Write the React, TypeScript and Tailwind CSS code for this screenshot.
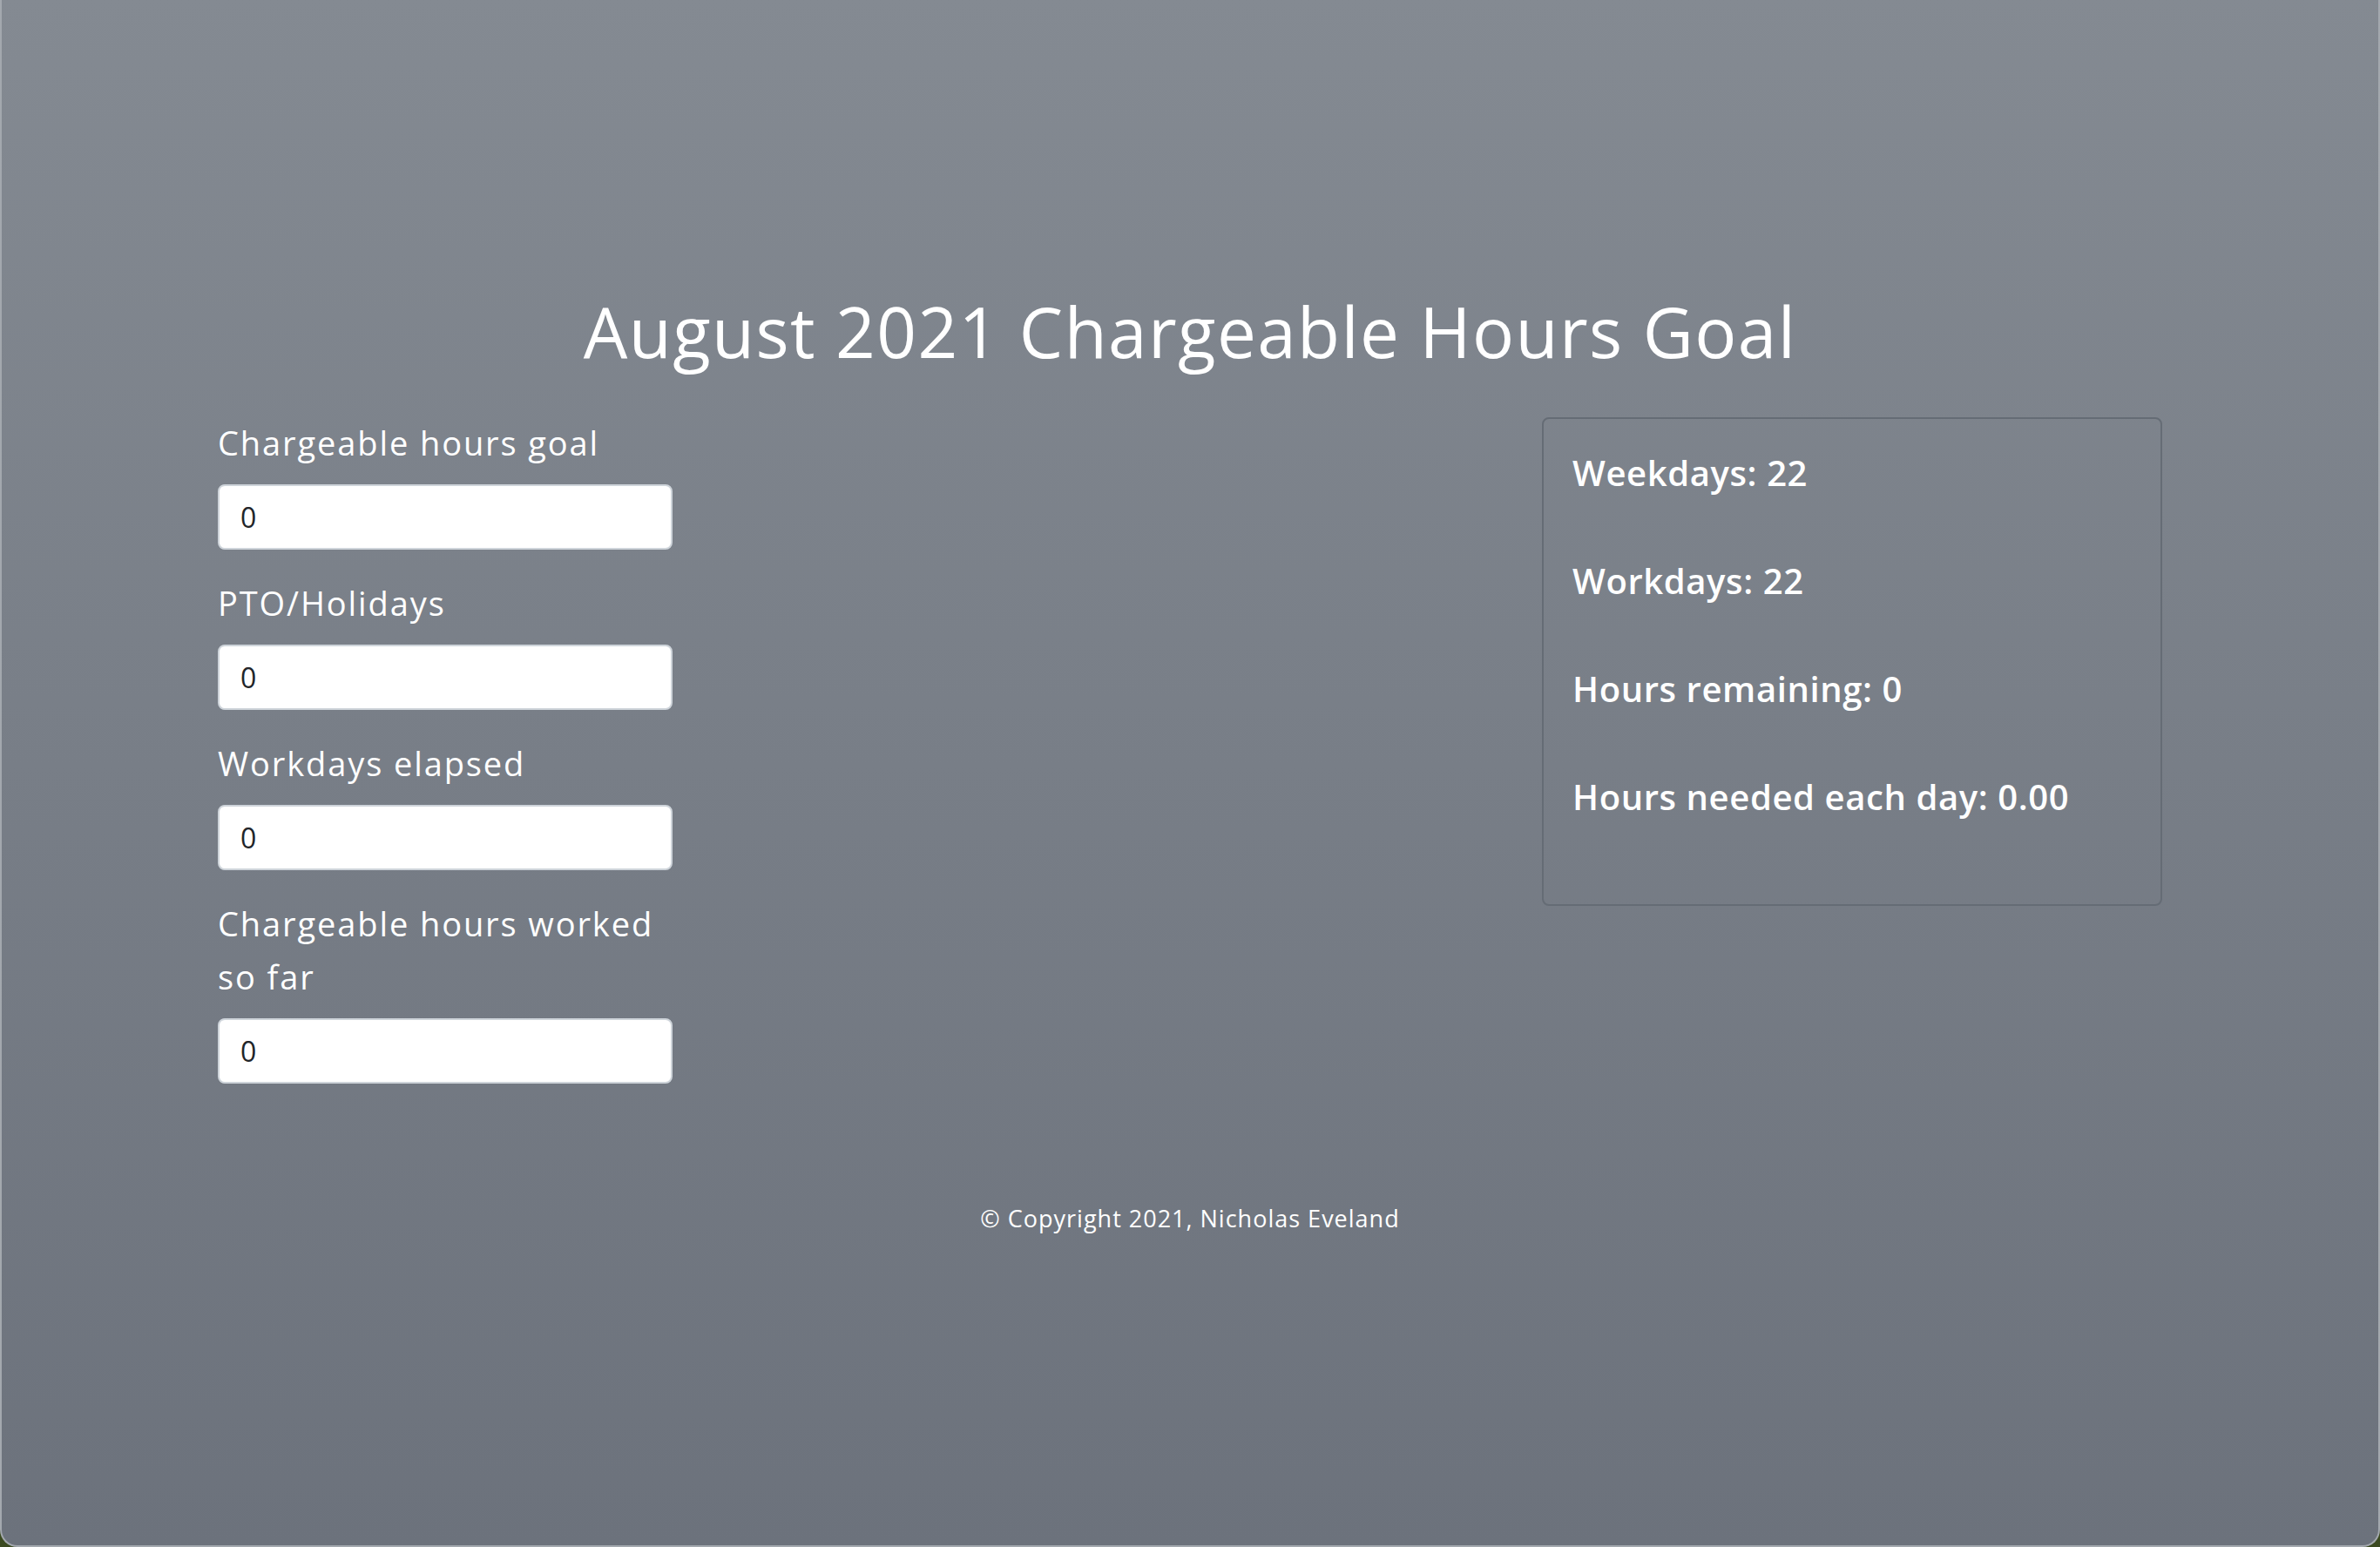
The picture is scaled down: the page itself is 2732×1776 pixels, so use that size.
import React from "react";

const font = { fontFamily: '"Open Sans", "Noto Sans", sans-serif' };

function Field({ label }: { label: string }) {
  return (
    <div className="flex flex-col">
      <label className="mb-[17px] text-[38px] leading-[61px] tracking-[1.9px] text-white">{label}</label>
      <input
        type="text"
        defaultValue="0"
        className="h-[75px] w-full rounded-[8px] border-2 border-[#ced4da] bg-white px-[24px] text-[32px] text-[#212529] outline-none"
        style={font}
      />
    </div>
  );
}

export default function App() {
  const stats = ["Weekdays: 22", "Workdays: 22", "Hours remaining: 0", "Hours needed each day: 0.00"];
  return (
    <div className="h-[1776px] w-full bg-[#3b4a20]" style={font}>
      <div className="flex h-[1776px] w-full flex-col items-center rounded-b-[20px] border-x-2 border-b-2 border-[#a3a8ae] bg-linear-to-b from-[#848a92] to-[#6c727c]">
        <h1 className="mt-[332px] text-[80px] leading-[96px] font-normal tracking-[1.4px] text-white">
          August 2021 Chargeable Hours Goal
        </h1>
        <div className="mt-[50px] flex w-[2232px] justify-between">
          <div className="flex w-[522px] flex-col gap-[31px]">
            <Field label="Chargeable hours goal" />
            <Field label="PTO/Holidays" />
            <Field label="Workdays elapsed" />
            <Field label="Chargeable hours worked so far" />
          </div>
          <div className="mt-[1px] flex h-[561px] w-[712px] flex-col gap-[76px] self-start rounded-[8px] border-2 border-[#656c75] px-[33px] pt-[38px]">
            {stats.map((s) => (
              <div key={s} className="text-[40px] leading-[48px] font-semibold tracking-[0.6px] text-white">
                {s}
              </div>
            ))}
          </div>
        </div>
        <footer className="mt-[135px] text-[27px] leading-[40px] tracking-[1px] text-white">
          © Copyright 2021, Nicholas Eveland
        </footer>
      </div>
    </div>
  );
}
